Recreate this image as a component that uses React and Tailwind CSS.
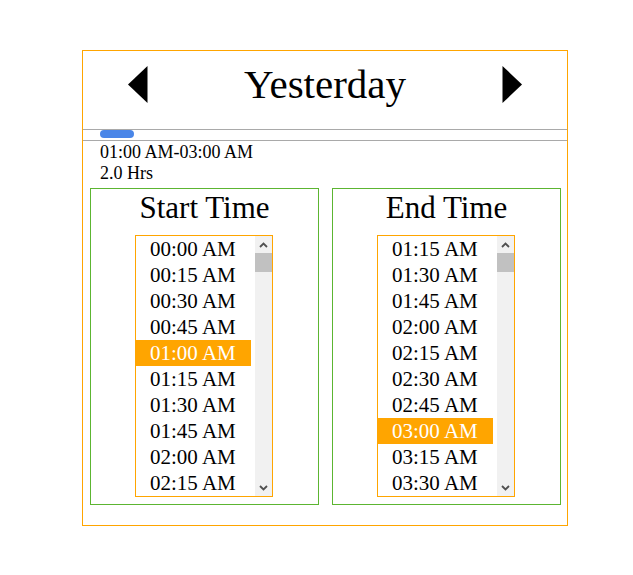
import React from "react";

const startTimes = [
  "00:00 AM", "00:15 AM", "00:30 AM", "00:45 AM", "01:00 AM",
  "01:15 AM", "01:30 AM", "01:45 AM", "02:00 AM", "02:15 AM",
];

const endTimes = [
  "01:15 AM", "01:30 AM", "01:45 AM", "02:00 AM", "02:15 AM",
  "02:30 AM", "02:45 AM", "03:00 AM", "03:15 AM", "03:30 AM",
];

function Chevron({ up }) {
  return (
    <svg width="9" height="6" viewBox="0 0 9 6">
      <path
        d={up ? "M1 5 L4.5 1.5 L8 5" : "M1 1 L4.5 4.5 L8 1"}
        fill="none"
        stroke="#505050"
        strokeWidth="1.8"
      />
    </svg>
  );
}

function TimeList({ items, selected }) {
  return (
    <div className="flex h-[262px] w-[138px] border border-[#ffa500] bg-white">
      <div className="flex w-[115px] flex-col">
        {items.map((t) => (
          <div
            key={t}
            className={`h-[26px] pl-[14px] text-[21px] leading-[26px] ${
              t === selected ? "bg-[#ffa500] text-white" : "text-black"
            }`}
          >
            {t}
          </div>
        ))}
      </div>
      <div className="w-[4px]" />
      <div className="flex w-[17px] flex-col bg-[#f1f1f1]">
        <div className="flex h-[17px] items-center justify-center">
          <Chevron up />
        </div>
        <div className="flex-1">
          <div className="h-[19px] bg-[#c1c1c1]" />
        </div>
        <div className="flex h-[17px] items-center justify-center">
          <Chevron />
        </div>
      </div>
    </div>
  );
}

function Panel({ title, items, selected }) {
  return (
    <div className="flex h-[317px] flex-col border border-[#5cb531]">
      <div className="mt-[2px] self-center text-[31px] leading-[34px]">{title}</div>
      <div className="ml-[44px] mt-[10px]">
        <TimeList items={items} selected={selected} />
      </div>
    </div>
  );
}

export default function App() {
  return (
    <div className="min-h-[575px] bg-white pl-[82px] pt-[50px] font-['Liberation_Serif','Times_New_Roman',serif] text-black">
      <div className="h-[476px] w-[486px] border border-[#ffa500]">
        {/* header */}
        <div className="flex h-[78px] items-start justify-between px-[45px] pt-[10px]">
          <div className="flex h-[46px] items-center">
            <svg width="20" height="37" viewBox="0 0 20 37">
              <polygon points="0,18.5 19.5,0 19.5,37" fill="#000" />
            </svg>
          </div>
          <div className="text-[41px] leading-[46px]">Yesterday</div>
          <div className="flex h-[46px] items-center">
            <svg width="20" height="37" viewBox="0 0 20 37">
              <polygon points="0.5,0 20,18.5 0.5,37" fill="#000" />
            </svg>
          </div>
        </div>

        {/* range strip */}
        <div className="h-[12px] border-y border-[#a9a9a9] pl-[17px]">
          <div className="h-[8px] w-[34px] rounded-full bg-[#4a86e8]" />
        </div>

        <div className="pl-[17px] pt-[1px] text-[18px] leading-[20.7px]">
          <div>01:00 AM-03:00 AM</div>
          <div>2.0 Hrs</div>
        </div>

        <div className="mt-[5px] grid grid-cols-[229px_229px] gap-[13px] pl-[7px]">
          <Panel title="Start Time" items={startTimes} selected="01:00 AM" />
          <Panel title="End Time" items={endTimes} selected="03:00 AM" />
        </div>
      </div>
    </div>
  );
}
